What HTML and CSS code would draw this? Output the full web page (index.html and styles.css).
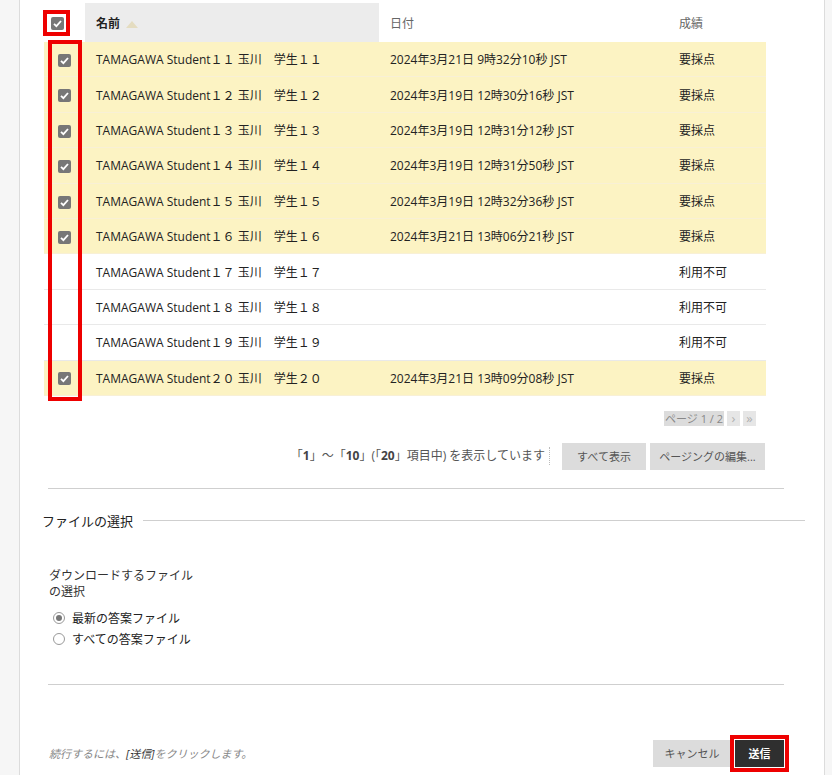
FILE: index.html
```html
<!DOCTYPE html>
<html lang="ja">
<head>
    <meta charset="UTF-8">
    <title>ダウンロード</title>
    <link rel="stylesheet" href="styles.css">
</head>
<body>
    <div class="page">
        <div class="grid-wrap">
            <table class="grid">
                <colgroup>
                    <col class="c-check">
                    <col class="c-name">
                    <col class="c-date">
                    <col class="c-grade">
                </colgroup>
                <thead>
                    <tr>
                        <th class="th-check"><span class="head-mark"><span class="box"><svg viewBox="0 0 13 13"><path d="M3 6.8 L5.4 9.2 L10 4" /></svg></span></span></th>
                        <th class="th-name">名前 <span class="sort-up"></span></th>
                        <th>日付</th>
                        <th>成績</th>
                    </tr>
                </thead>
                <tbody>
                    <tr class="sel">
                        <td class="td-check"><span class="box"><svg viewBox="0 0 13 13"><path d="M3 6.8 L5.4 9.2 L10 4" /></svg></span></td>
                        <td>TAMAGAWA Student１１ 玉川　学生１１</td>
                        <td>2024年3月21日 9時32分10秒 JST</td>
                        <td>要採点</td>
                    </tr>
                    <tr class="sel">
                        <td class="td-check"><span class="box"><svg viewBox="0 0 13 13"><path d="M3 6.8 L5.4 9.2 L10 4" /></svg></span></td>
                        <td>TAMAGAWA Student１２ 玉川　学生１２</td>
                        <td>2024年3月19日 12時30分16秒 JST</td>
                        <td>要採点</td>
                    </tr>
                    <tr class="sel">
                        <td class="td-check"><span class="box"><svg viewBox="0 0 13 13"><path d="M3 6.8 L5.4 9.2 L10 4" /></svg></span></td>
                        <td>TAMAGAWA Student１３ 玉川　学生１３</td>
                        <td>2024年3月19日 12時31分12秒 JST</td>
                        <td>要採点</td>
                    </tr>
                    <tr class="sel">
                        <td class="td-check"><span class="box"><svg viewBox="0 0 13 13"><path d="M3 6.8 L5.4 9.2 L10 4" /></svg></span></td>
                        <td>TAMAGAWA Student１４ 玉川　学生１４</td>
                        <td>2024年3月19日 12時31分50秒 JST</td>
                        <td>要採点</td>
                    </tr>
                    <tr class="sel">
                        <td class="td-check"><span class="box"><svg viewBox="0 0 13 13"><path d="M3 6.8 L5.4 9.2 L10 4" /></svg></span></td>
                        <td>TAMAGAWA Student１５ 玉川　学生１５</td>
                        <td>2024年3月19日 12時32分36秒 JST</td>
                        <td>要採点</td>
                    </tr>
                    <tr class="sel">
                        <td class="td-check"><span class="box"><svg viewBox="0 0 13 13"><path d="M3 6.8 L5.4 9.2 L10 4" /></svg></span></td>
                        <td>TAMAGAWA Student１６ 玉川　学生１６</td>
                        <td>2024年3月21日 13時06分21秒 JST</td>
                        <td>要採点</td>
                    </tr>
                    <tr>
                        <td class="td-check"></td>
                        <td>TAMAGAWA Student１７ 玉川　学生１７</td>
                        <td></td>
                        <td>利用不可</td>
                    </tr>
                    <tr>
                        <td class="td-check"></td>
                        <td>TAMAGAWA Student１８ 玉川　学生１８</td>
                        <td></td>
                        <td>利用不可</td>
                    </tr>
                    <tr>
                        <td class="td-check"></td>
                        <td>TAMAGAWA Student１９ 玉川　学生１９</td>
                        <td></td>
                        <td>利用不可</td>
                    </tr>
                    <tr class="sel">
                        <td class="td-check"><span class="box"><svg viewBox="0 0 13 13"><path d="M3 6.8 L5.4 9.2 L10 4" /></svg></span></td>
                        <td>TAMAGAWA Student２０ 玉川　学生２０</td>
                        <td>2024年3月21日 13時09分08秒 JST</td>
                        <td>要採点</td>
                    </tr>
                </tbody>
            </table>
            <div class="mark-rows"></div>
        </div>

        <div class="pager">
            <span class="pager-label">ページ 1 / 2</span>
            <span class="pager-btn">&rsaquo;</span>
            <span class="pager-btn">&raquo;</span>
        </div>

        <div class="summary">
            <span class="summary-text">「<b>1</b>」～「<b>10</b>」(「<b>20</b>」項目中) を表示しています</span>
            <button class="grey-btn show-all">すべて表示</button>
            <button class="grey-btn edit-paging">ページングの編集...</button>
        </div>

        <div class="rule"></div>

        <h3 class="step-title">ファイルの選択</h3>

        <div class="field">
            <div class="field-label">ダウンロードするファイルの選択</div>
            <label class="radio-row"><span class="radio on"></span>最新の答案ファイル</label>
            <label class="radio-row"><span class="radio"></span>すべての答案ファイル</label>
        </div>

        <div class="rule rule-bottom"></div>

        <div class="submit-row">
            <p class="hint">続行するには、<em>[送信]</em>をクリックします。</p>
            <div class="actions">
                <button class="grey-btn cancel">キャンセル</button>
                <button class="submit">送信</button>
            </div>
        </div>
    </div>
</body>
</html>
```

FILE: styles.css
```css
body {
    margin: 0;
    background-color: #f6f6f6;
    font-family: "Open Sans", "Noto Sans CJK JP", sans-serif;
    font-size: 12px;
    color: #333;
}
.page {
    margin-left: 19px;
    width: 804px;
    height: 775px;
    background-color: #fff;
    border-left: 1px solid #dcdcdc;
    border-right: 1px solid #dcdcdc;
    overflow: hidden;
}
.grid-wrap {
    position: relative;
    margin: 3px 0 0 24px;
    width: 722px;
}
.grid {
    width: 722px;
    table-layout: fixed;
    border-collapse: collapse;
}
.c-check { width: 41px; }
.c-name { width: 294px; }
.c-date { width: 289px; }
.c-grade { width: 98px; }
.grid th {
    height: 39px;
    padding: 0 0 0 11px;
    text-align: left;
    font-weight: normal;
    color: #666;
}
.grid th.th-name {
    background-color: #ececec;
    font-weight: bold;
    color: #222;
}
.grid th.th-check {
    padding-left: 0;
}
.head-mark {
    display: inline-block;
    padding: 3px 2px 2px 4px;
    border: 4px solid #ee0000;
    line-height: 0;
    vertical-align: middle;
    margin-left: -1px;
}
.sort-up {
    display: inline-block;
    width: 0;
    height: 0;
    margin-left: 3px;
    border-left: 6px solid transparent;
    border-right: 6px solid transparent;
    border-bottom: 7px solid #e4dcc0;
    vertical-align: 0;
}
.grid td {
    height: 34.4px;
    padding: 0 0 0 11px;
    border-bottom: 1px solid #e9e9e9;
    white-space: nowrap;
    color: #222;
}
.grid tr.sel td {
    background-color: #fcf3c3;
    border-bottom-color: #f8f0d6;
}
.grid td.td-check {
    padding: 0;
    text-align: center;
}
.box {
    display: inline-block;
    width: 13px;
    height: 13px;
    background-color: #777;
    border-radius: 2px;
    vertical-align: middle;
}
.box svg {
    display: block;
    width: 13px;
    height: 13px;
}
.box path {
    fill: none;
    stroke: #fff;
    stroke-width: 1.8;
}
.mark-rows {
    position: absolute;
    left: 4px;
    top: 37px;
    width: 26px;
    height: 353px;
    border: 4px solid #ee0000;
}
.pager {
    display: flex;
    justify-content: flex-end;
    gap: 3px;
    margin: 15px 0 0;
    padding-right: 68px;
    height: 15px;
}
.pager-label {
    background-color: #dcdcdc;
    color: #888;
    font-size: 11px;
    line-height: 15px;
    padding: 0 1px;
}
.pager-btn {
    width: 13px;
    background-color: #e6e6e6;
    color: #b0b0b0;
    font-size: 13px;
    line-height: 14px;
    text-align: center;
}
.summary {
    display: flex;
    justify-content: flex-end;
    align-items: center;
    gap: 4px;
    margin-top: 17px;
    padding-right: 59px;
    height: 27px;
}
.summary-text {
    color: #555;
    padding-right: 4px;
    margin-right: 8px;
    border-right: 1px dotted #bbb;
    line-height: 18px;
}
.summary-text b {
    color: #444;
}
.grey-btn {
    height: 27px;
    border: none;
    background-color: #dcdcdc;
    color: #555;
    font-family: inherit;
    font-size: 11px;
    padding: 0;
}
.show-all { width: 84px; }
.edit-paging { width: 115px; }
.rule {
    margin: 18px 40px 0 28px;
    border-top: 1px solid #cfcfcf;
}
.step-title {
    display: flex;
    align-items: center;
    margin: 22px 19px 0 22px;
    font-size: 13px;
    font-weight: normal;
    color: #222;
}
.step-title::after {
    content: "";
    flex: 1;
    margin-left: 10px;
    border-top: 1px solid #cfcfcf;
}
.field {
    margin: 38px 0 0 29px;
}
.field-label {
    width: 145px;
    line-height: 16px;
    color: #333;
}
.radio-row {
    display: flex;
    align-items: center;
    height: 21px;
    margin-left: 4px;
    color: #222;
}
.radio-row:first-of-type {
    margin-top: 8px;
}
.radio {
    width: 10px;
    height: 10px;
    margin-right: 7px;
    border: 1px solid #999;
    border-radius: 50%;
    background-color: #fff;
    position: relative;
}
.radio.on::after {
    content: "";
    position: absolute;
    left: 2px;
    top: 2px;
    width: 6px;
    height: 6px;
    border-radius: 50%;
    background-color: #777;
}
.rule-bottom {
    margin-top: 34px;
}
.submit-row {
    display: flex;
    justify-content: space-between;
    align-items: center;
    margin: 55px 40px 0 29px;
}
.hint {
    margin: 0;
    font-size: 11px;
    font-style: italic;
    color: #888;
}
.hint em {
    color: #333;
}
.actions {
    display: flex;
    gap: 4px;
}
.cancel { width: 78px; }
.submit {
    width: 49px;
    height: 27px;
    border: none;
    background-color: #2f2f2f;
    color: #fff;
    font-family: inherit;
    font-size: 11px;
    font-weight: bold;
    padding: 0;
    outline: 4px solid #ee0000;
    outline-offset: 1px;
}
```
